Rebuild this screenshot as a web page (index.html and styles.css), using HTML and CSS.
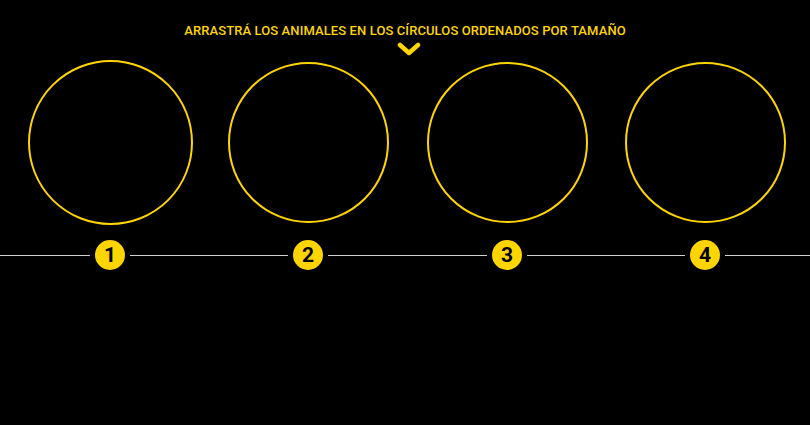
FILE: index.html
```html
<!DOCTYPE html>
<html lang="es">
<head>
<meta charset="utf-8">
<title>Ordenar animales</title>
<link rel="stylesheet" href="styles.css">
</head>
<body>
<main class="stage">
  <header class="prompt">
    <p class="prompt-text">ARRASTRÁ LOS ANIMALES EN LOS CÍRCULOS ORDENADOS POR TAMAÑO</p>
    <svg class="chevron" width="24" height="14" viewBox="0 0 24 14">
      <polyline points="3,3 12,11 21,3" fill="none" stroke="#ffd500" stroke-width="4.5" stroke-linecap="round" stroke-linejoin="round"/>
    </svg>
  </header>
  <section class="slots">
    <div class="slot"><div class="ring ring-active"></div></div>
    <div class="slot"><div class="ring"></div></div>
    <div class="slot"><div class="ring"></div></div>
    <div class="slot"><div class="ring"></div></div>
  </section>
  <section class="timeline">
    <span class="line line-start"></span>
    <span class="badge">1</span>
    <span class="line line-mid"></span>
    <span class="badge">2</span>
    <span class="line line-mid2"></span>
    <span class="badge">3</span>
    <span class="line line-mid"></span>
    <span class="badge">4</span>
    <span class="line line-end"></span>
  </section>
</main>
</body>
</html>
```
FILE: styles.css
```css
html, body {
  margin: 0;
  padding: 0;
  background: #000;
}
.stage {
  width: 810px;
  height: 425px;
  background: #000;
  font-family: Roboto, "Liberation Sans", sans-serif;
}
.prompt {
  display: flex;
  flex-direction: column;
  align-items: center;
  padding-top: 23px;
}
.prompt-text {
  margin: 0;
  color: #ffd500;
  font-size: 13px;
  line-height: 16px;
  font-weight: 500;
  letter-spacing: 0.1px;
}
.chevron {
  display: block;
  margin-top: 3px;
  margin-left: 8px;
}
.slots {
  display: grid;
  grid-template-columns: repeat(4, 198.5px);
  padding-left: 11px;
  height: 165px;
  align-items: center;
  margin-top: 4px;
}
.slot {
  display: flex;
  justify-content: center;
  align-items: center;
}
.ring {
  width: 157px;
  height: 157px;
  border: 2px solid #ffd500;
  border-radius: 50%;
  box-sizing: content-box;
}
.ring-active {
  width: 161px;
  height: 161px;
}
.timeline {
  display: flex;
  align-items: center;
  gap: 5px;
  height: 30px;
  margin-top: 15px;
}
.line {
  height: 1px;
  background: #d0d0d0;
}
.line-start { width: 90px; }
.line-mid { width: 158px; }
.line-mid2 { width: 159px; }
.line-end { flex: 1; }
.badge {
  width: 30px;
  height: 30px;
  border-radius: 50%;
  background: #ffd500;
  color: #000;
  display: flex;
  align-items: center;
  justify-content: center;
  font-size: 21px;
  font-weight: 700;
  line-height: 1;
}
```
